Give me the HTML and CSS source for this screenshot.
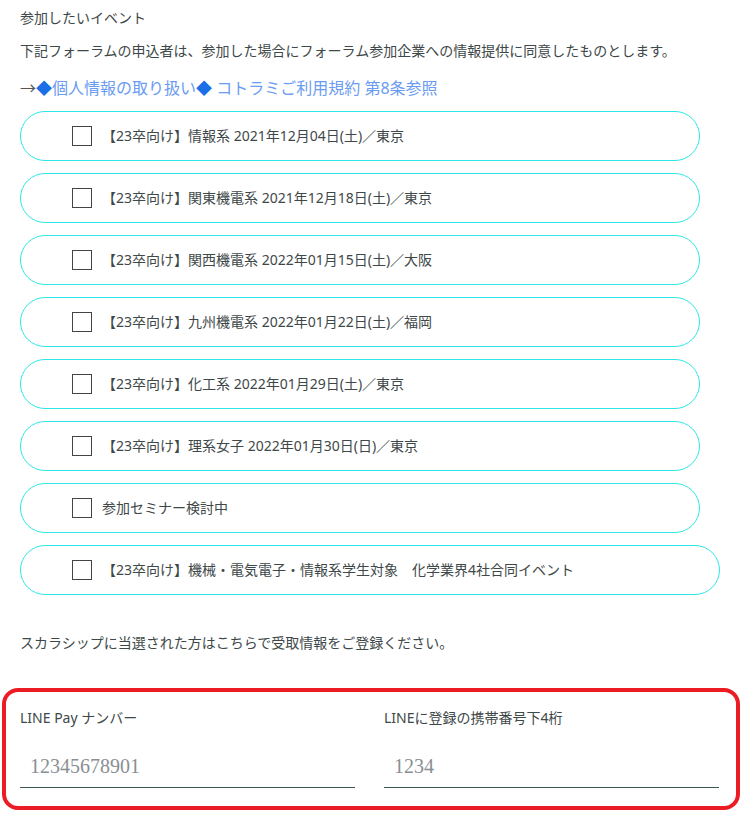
FILE: index.html
```html
<!DOCTYPE html>
<html lang="ja">
<head>
    <meta charset="UTF-8">
    <meta name="viewport" content="width=device-width, initial-scale=1.0">
    <title>参加したいイベント</title>
    <link rel="stylesheet" href="styles.css">
</head>
<body>
    <div class="page">
        <p class="title">参加したいイベント</p>
        <p class="note">下記フォーラムの申込者は、参加した場合にフォーラム参加企業への情報提供に同意したものとします。</p>
        <a href="#" class="policy"><span class="arrow">→</span><span class="diamond">◆</span>個人情報の取り扱い<span class="diamond">◆</span> コトラミご利用規約 第8条参照</a>

        <div class="events">
            <label class="pill"><input type="checkbox"><span>【23卒向け】情報系 2021年12月04日(土)／東京</span></label>
            <label class="pill"><input type="checkbox"><span>【23卒向け】関東機電系 2021年12月18日(土)／東京</span></label>
            <label class="pill"><input type="checkbox"><span>【23卒向け】関西機電系 2022年01月15日(土)／大阪</span></label>
            <label class="pill"><input type="checkbox"><span>【23卒向け】九州機電系 2022年01月22日(土)／福岡</span></label>
            <label class="pill"><input type="checkbox"><span>【23卒向け】化工系 2022年01月29日(土)／東京</span></label>
            <label class="pill"><input type="checkbox"><span>【23卒向け】理系女子 2022年01月30日(日)／東京</span></label>
            <label class="pill"><input type="checkbox"><span>参加セミナー検討中</span></label>
            <label class="pill pill-wide"><input type="checkbox"><span>【23卒向け】機械・電気電子・情報系学生対象　化学業界4社合同イベント</span></label>
        </div>

        <p class="scholar">スカラシップに当選された方はこちらで受取情報をご登録ください。</p>
    </div>

    <div class="line-box">
        <div class="field">
            <label for="payNumber">LINE Pay ナンバー</label>
            <input type="text" id="payNumber" placeholder="12345678901">
        </div>
        <div class="field">
            <label for="telLast">LINEに登録の携帯番号下4桁</label>
            <input type="text" id="telLast" placeholder="1234">
        </div>
    </div>
</body>
</html>
```

FILE: styles.css
```css
* {
    margin: 0;
    padding: 0;
    box-sizing: border-box;
}

body {
    font-family: "Noto Sans", "Noto Sans CJK JP", sans-serif;
    font-size: 14px;
    color: #3e4848;
    background: #fff;
    padding: 0 2px;
}

.page {
    padding: 8px 18px 0;
}

.title,
.note,
.scholar {
    line-height: 20px;
}

.note {
    margin-top: 13px;
}

.policy {
    display: block;
    margin-top: 15px;
    font-size: 16px;
    line-height: 24px;
    color: #6a9cf2;
    text-decoration: none;
}

.policy .arrow {
    color: #555;
}

.policy .diamond {
    color: #1a6fe6;
}

.events {
    display: flex;
    flex-direction: column;
    gap: 12px;
    margin-top: 11px;
}

.pill {
    display: flex;
    align-items: center;
    gap: 10px;
    width: 680px;
    height: 50px;
    padding-left: 51px;
    border: 1px solid #2ee6e6;
    border-radius: 25px;
    cursor: pointer;
}

.pill span {
    padding-bottom: 2px;
}

.pill-wide {
    width: 700px;
}

.pill input {
    appearance: none;
    width: 20px;
    height: 20px;
    border: 1.5px solid #444;
    background: #fff;
    flex-shrink: 0;
}

.pill input:checked {
    background: #2ee6e6;
}

.scholar {
    margin-top: 38px;
}

.line-box {
    display: grid;
    grid-template-columns: 1fr 1fr;
    gap: 29px;
    width: 738px;
    margin-top: 35px;
    padding: 16px 17px 18px 14px;
    border: 4px solid #ec1c24;
    border-radius: 16px;
}

.field label {
    display: block;
    line-height: 20px;
}

.field input {
    display: block;
    width: 100%;
    height: 41px;
    margin-top: 19px;
    padding: 0 10px 2px;
    border: none;
    border-bottom: 1px solid #3b5b52;
    outline: none;
    font-family: "Liberation Serif", serif;
    font-size: 20px;
    color: #333;
}

.field input::placeholder {
    color: #8a8f93;
}
```
